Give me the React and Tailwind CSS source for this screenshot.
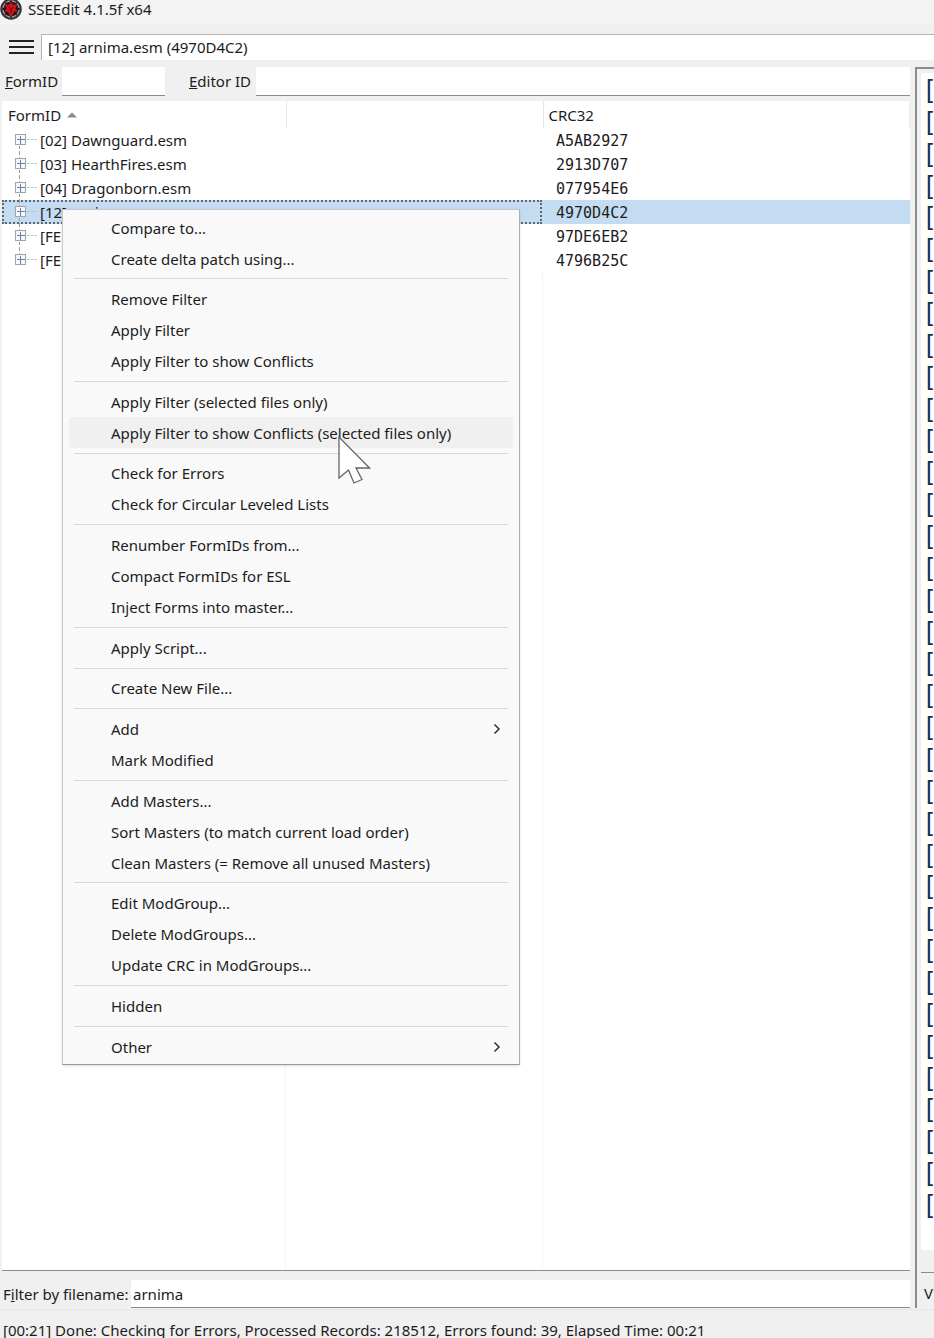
import { useState } from 'react';

const files = [
    { name: '[02] Dawnguard.esm', crc: 'A5AB2927' },
    { name: '[03] HearthFires.esm', crc: '2913D707' },
    { name: '[04] Dragonborn.esm', crc: '077954E6' },
    { name: '[12] arnima.esm', crc: '4970D4C2' },
    { name: '[FE 000]', crc: '97DE6EB2' },
    { name: '[FE 001]', crc: '4796B25C' },
];

const menuGroups = [
    ['Compare to...', 'Create delta patch using...'],
    ['Remove Filter', 'Apply Filter', 'Apply Filter to show Conflicts'],
    ['Apply Filter (selected files only)', 'Apply Filter to show Conflicts (selected files only)'],
    ['Check for Errors', 'Check for Circular Leveled Lists'],
    ['Renumber FormIDs from...', 'Compact FormIDs for ESL', 'Inject Forms into master...'],
    ['Apply Script...'],
    ['Create New File...'],
    ['Add', 'Mark Modified'],
    ['Add Masters...', 'Sort Masters (to match current load order)', 'Clean Masters (= Remove all unused Masters)'],
    ['Edit ModGroup...', 'Delete ModGroups...', 'Update CRC in ModGroups...'],
    ['Hidden'],
    ['Other'],
];

const submenus = ['Add', 'Other'];
const hovered = 'Apply Filter to show Conflicts (selected files only)';
const logLines = Array.from({ length: 36 }, (_, i) => i);

function AppIcon() {
    return (
        <svg width="22" height="22" viewBox="0 0 22 22" className="shrink-0">
            <circle cx="11" cy="11" r="10" fill="#55585d" stroke="#2f2f33" strokeWidth="1.5" />
            <circle cx="11" cy="11" r="8" fill="#33262a" stroke="#a3a6aa" strokeWidth="1" />
            <path d="M11 1.500l2 4.500 4-2-1 4.500 4.500 2.500-4.500 2.500 1 4-4-1.500L11 21l-2-5-4 1.500 1-4L1.500 11 6 8.500 5 4l4 2z" fill="#35090d" />
            <path d="M11 3.500l2 3.500 4-1-1.500 4.500 2 2.500-3.500 1L11 19.500l-3-5.500-3.500-1 2-2.500L5 6l4 1z" fill="#c8161c" />
            <path d="M9 9l2 2.500L13 9M11 11.500V15" stroke="#5d080c" fill="none" />
        </svg>
    );
}

function Expander({ first, last }) {
    return (
        <svg width="36" height="24" viewBox="0 0 36 24" className="block" shapeRendering="crispEdges">
            {!first && <path d="M17.500 0V7" stroke="#9a9a9a" strokeDasharray="3 2" />}
            {!last && <path d="M17.500 18V24" stroke="#9a9a9a" strokeDasharray="3 2" />}
            <path d="M25 11.500H35" stroke="#c4c4c4" strokeDasharray="3 1" />
            <rect x="13.500" y="6.500" width="10" height="10" fill="#f7f8fb" stroke="#a3a3a3" />
            <path d="M15 11.500H23M18.500 8V16" stroke="#6a7fb8" />
        </svg>
    );
}

function ContextMenu() {
    return (
        <div role="menu" className="absolute left-[62px] top-[209px] w-[458px] h-[856px] flex flex-col pt-0.5 pb-0.5 bg-[#f9f9f9] border border-[#c8c8c8] border-b-[#9a9a9a] border-r-[#adadad] shadow-sm z-10">
            {menuGroups.map((group, g) => (
                <div key={g} className="contents">
                    {g > 0 && (
                        <div role="separator" className="flex-1 flex flex-col justify-center px-[11px]">
                            <div className="h-px bg-[#d9d9d9]"></div>
                        </div>
                    )}
                    {group.map(label => (
                        <button
                            key={label}
                            type="button"
                            role="menuitem"
                            className={`h-[31px] shrink-0 mx-1.5 pl-[42px] pr-[11px] flex items-center justify-between text-left rounded-sm hover:bg-[#f0f0f0] ${label === hovered ? 'bg-[#f0f0f0]' : ''}`}
                        >
                            {label}
                            {submenus.includes(label) && (
                                <svg width="10" height="12" viewBox="0 0 10 12" fill="none" stroke="#333" strokeWidth="1.5">
                                    <path d="M2.500 1.500L7 6L2.500 10.500" />
                                </svg>
                            )}
                        </button>
                    ))}
                </div>
            ))}
        </div>
    );
}

function FileTree() {
    return (
        <div className="flex-1 min-h-0 flex flex-col ml-0.5 bg-white border-b border-[#8c8c8c]">
            <table className="w-full table-fixed border-collapse text-left">
                <colgroup>
                    <col className="w-[284px]" />
                    <col className="w-[257px]" />
                    <col />
                </colgroup>
                <thead>
                    <tr className="h-[27px]">
                        <th className="p-0 pl-1.5 font-normal border-r border-[#e5e5e5]">
                            <span className="flex items-center gap-1.5">
                                FormID
                                <svg width="10" height="6" viewBox="0 0 12 6"><path d="M6 0L12 6H0z" fill="#8a8a8a" /></svg>
                            </span>
                        </th>
                        <th className="p-0 border-r border-[#e5e5e5]"></th>
                        <th className="p-0 pl-[5px] font-normal border-r border-[#ececec]">CRC32</th>
                    </tr>
                </thead>
                <tbody>
                    {files.map((file, i) => {
                        const selected = i === 3;
                        return (
                            <tr key={file.name} className={`h-6 ${selected ? 'bg-[#c4dcf1]' : ''}`}>
                                <td colSpan={2} className="p-0">
                                    <div className={`h-6 mr-px flex items-center overflow-hidden ${selected ? 'outline-2 -outline-offset-2 outline-dotted outline-[#5f6870]' : ''}`}>
                                        <button type="button" aria-label={`Expand ${file.name}`}>
                                            <Expander first={i === 0} last={i === files.length - 1} />
                                        </button>
                                        <span className="pl-0.5">{file.name}</span>
                                    </div>
                                </td>
                                <td className="p-0 pl-[13px] pt-0.5 font-['DejaVu_Sans_Mono',monospace] text-[15px]">{file.crc}</td>
                            </tr>
                        );
                    })}
                </tbody>
            </table>
            <div className="flex-1 flex">
                <div className="w-[284px] border-r border-dotted border-[#ececec]"></div>
                <div className="w-[257px] border-r border-dotted border-[#ececec]"></div>
            </div>
        </div>
    );
}

export default function App() {
    const [path, setPath] = useState('[12] arnima.esm (4970D4C2)');
    const [formId, setFormId] = useState('');
    const [editorId, setEditorId] = useState('');
    const [filter, setFilter] = useState('arnima');

    return (
        <div className="relative h-screen overflow-hidden flex flex-col bg-[#f0f0f0] text-[#1c1c1c] text-[15px] leading-5 font-['Noto_Sans',sans-serif]">
            <header className="h-6 shrink-0 flex items-center gap-1.5 pb-1.5 bg-[#f3f3f3]">
                <AppIcon />
                <h1>SSEEdit 4.1.5f x64</h1>
            </header>

            <div className="shrink-0 flex items-center pt-2.5 pl-2">
                <button type="button" aria-label="Menu" className="w-[33px]">
                    <svg width="26" height="16" viewBox="0 0 26 16" className="block" stroke="#222" strokeWidth="2">
                        <path d="M1 2H26M1 8H26M1 14H26" />
                    </svg>
                </button>
                <input
                    type="text"
                    aria-label="Path"
                    value={path}
                    onChange={(e) => setPath(e.target.value)}
                    className="flex-1 min-w-0 h-[26px] pl-1.5 pb-0.5 bg-white border-t border-l border-[#b5b5b5] outline-none"
                />
            </div>

            <div className="flex-1 min-h-0 flex pt-[7px]">
                <main className="flex-1 min-w-0 flex flex-col">
                    <div className="shrink-0 flex items-center pl-[5px] mb-[5px]">
                        <label htmlFor="form-id" className="w-[57px] pb-0.5"><span className="underline">F</span>ormID</label>
                        <input id="form-id" type="text" value={formId} onChange={(e) => setFormId(e.target.value)} className="w-[103px] h-[29px] px-1 bg-white border-b border-[#8c8c8c] outline-none" />
                        <label htmlFor="editor-id" className="w-[67px] ml-6 pb-0.5"><span className="underline">E</span>ditor ID</label>
                        <input id="editor-id" type="text" value={editorId} onChange={(e) => setEditorId(e.target.value)} className="flex-1 min-w-0 h-[29px] px-1 bg-white border-b border-[#8c8c8c] outline-none" />
                    </div>
                    <FileTree />
                    <div className="shrink-0 flex items-center pl-[3px] mt-[9px]">
                        <label htmlFor="filter" className="w-32">F<span className="underline">i</span>lter by filename:</label>
                        <input id="filter" type="text" value={filter} onChange={(e) => setFilter(e.target.value)} className="flex-1 min-w-0 h-7 px-0.5 bg-white border-b border-[#8c8c8c] outline-none" />
                    </div>
                </main>

                <aside className="w-[19px] ml-[5px] shrink-0 flex flex-col overflow-hidden border-t-2 border-l-2 border-[#8c8c8c]">
                    <div className="flex-1 min-h-0 flex flex-col ml-1 mt-1 bg-white border-b border-[#8c8c8c]">
                        <div className="flex-1 min-h-0 grid auto-rows-fr mb-[30px] pl-[5px] font-['Liberation_Sans',sans-serif] text-[25px] leading-6 text-[#14304f]">
                            {logLines.map(i => <span key={i} className="flex items-center min-h-0">[</span>)}
                        </div>
                        <div className="h-[22px] shrink-0 bg-[#f0f0f0]"></div>
                    </div>
                    <div className="h-[35px] shrink-0 pl-[7px] pt-2.5">V</div>
                </aside>
            </div>

            <footer className="h-[29px] shrink-0 mt-px pl-[3px] pt-2.5 border-t border-[#e6e6e6] whitespace-nowrap">
                [00:21] Done: Checking for Errors, Processed Records: 218512, Errors found: 39, Elapsed Time: 00:21
            </footer>

            <ContextMenu />

            <svg width="34" height="50" viewBox="0 0 34 50" className="absolute left-[337px] top-[435px] z-20" fill="#fff" stroke="#666" strokeWidth="1.300">
                <path d="M2 2V43L11.500 35L17 48L25 44.500L19 33H32.500z" />
            </svg>
        </div>
    );
}
